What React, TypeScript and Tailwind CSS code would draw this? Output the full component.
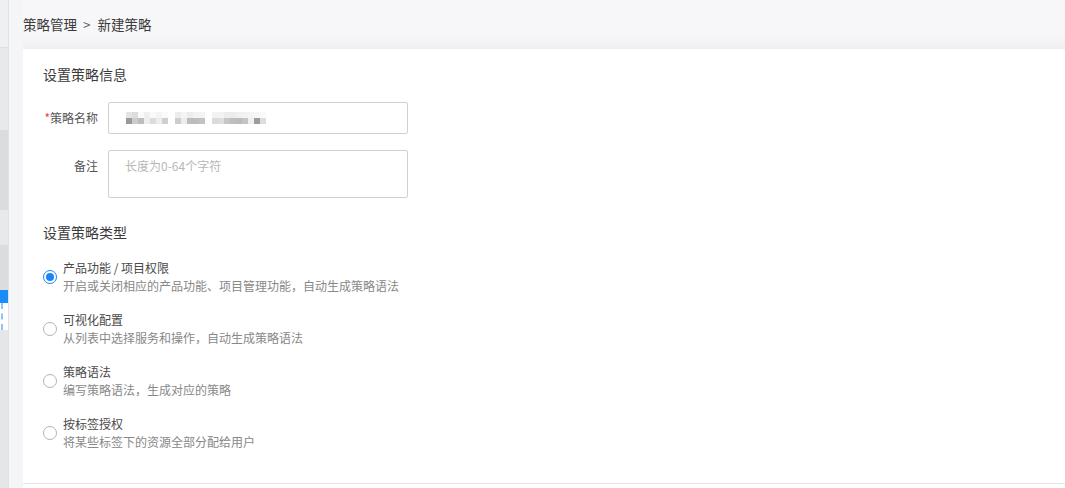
import React from 'react'

const font = "font-['Noto_Sans_CJK_SC','Microsoft_YaHei',sans-serif]"

interface PolicyType {
  title: string
  desc: string
  checked?: boolean
}

const policyTypes: PolicyType[] = [
  { title: '产品功能 / 项目权限', desc: '开启或关闭相应的产品功能、项目管理功能，自动生成策略语法', checked: true },
  { title: '可视化配置', desc: '从列表中选择服务和操作，自动生成策略语法' },
  { title: '策略语法', desc: '编写策略语法，生成对应的策略' },
  { title: '按标签授权', desc: '将某些标签下的资源全部分配给用户' },
]

// mosaic over the masked policy name
const mosaicTop: string[][] = [
  ['bg-[#e4e4e4]', 'bg-[#dcdcdc]', 'bg-[#fafafa]', 'bg-[#f0f0f0]', 'bg-[#fafafa]', 'bg-[#f4f4f4]', 'bg-[#fafafa]'],
  ['bg-[#ececec]', 'bg-[#f4f4f4]', 'bg-[#ececec]', 'bg-[#f2f2f2]', 'bg-[#f4f4f4]'],
  ['bg-[#f2f2f2]', 'bg-[#f2f2f2]', 'bg-[#ececec]', 'bg-[#ececec]', 'bg-[#f0f0f0]', 'bg-[#f2f2f2]', 'bg-[#f4f4f4]', 'bg-[#f6f6f6]', 'bg-[#fafafa]'],
]
const mosaicBottom: string[][] = [
  ['bg-[#9a9a9a]', 'bg-[#cbcbcb]', 'bg-[#bdbdbd]', 'bg-[#eeeeee]', 'bg-[#dcdcdc]', 'bg-[#ededed]', 'bg-[#cfcfcf]'],
  ['bg-[#cdcdcd]', 'bg-[#ededed]', 'bg-[#bcbcbc]', 'bg-[#bdbdbd]', 'bg-[#c2c2c2]'],
  ['bg-[#dadada]', 'bg-[#dedede]', 'bg-[#c6c6c6]', 'bg-[#bebebe]', 'bg-[#bbbbbb]', 'bg-[#c4c4c4]', 'bg-[#efefef]', 'bg-[#9c9c9c]', 'bg-[#dddddd]'],
]

function Mosaic() {
  return (
    <div className="flex gap-[7px]">
      {mosaicTop.map((group, g) => (
        <div key={g} className="flex flex-col">
          <div className="flex">
            {group.map((c, i) => (
              <div key={i} className={`h-[6px] w-[6px] ${c}`} />
            ))}
          </div>
          <div className="flex">
            {mosaicBottom[g].map((c, i) => (
              <div key={i} className={`h-[6px] w-[6px] ${c}`} />
            ))}
          </div>
        </div>
      ))}
    </div>
  )
}

function Radio({ checked }: { checked?: boolean }) {
  return checked ? (
    <div className="flex h-[14px] w-[14px] shrink-0 items-center justify-center rounded-full border border-[#1a86f5] bg-white">
      <div className="h-[8px] w-[8px] rounded-full bg-[#1a86f5]" />
    </div>
  ) : (
    <div className="h-[14px] w-[14px] shrink-0 rounded-full border border-[#b4b4b4] bg-white" />
  )
}

export default function App() {
  return (
    <div className={`flex h-[488px] w-[1065px] overflow-hidden bg-[#f4f5f7] ${font}`}>
      {/* cut-off side menu */}
      <div className="flex w-[9px] shrink-0 flex-col border-r border-[#e2e2e4]">
        <div className="h-[48px] bg-[#f0f0f2] border-b border-[#e0e0e2]" />
        <div className="h-[82px] bg-[#e9e9eb]" />
        <div className="h-[80px] bg-[#dcdcde]" />
        <div className="h-[35px] bg-[#e9e9eb]" />
        <div className="h-[45px] bg-[#dcdcde]" />
        <div className="h-[13px] bg-[#1a8cf7]" />
        <div className="flex h-[27px] bg-white pl-px">
          <div className="w-[2px] border-l-2 border-dashed border-[#8ec4f7]" />
        </div>
        <div className="flex-1 bg-[#e6e6e8]" />
      </div>

      <div className="flex min-w-0 flex-1 flex-col pl-[14px]">
        <div className="flex h-[49px] shrink-0 items-center bg-gradient-to-b from-[#f7f7f9] from-70% to-[#efeff1] text-[13.5px] leading-none text-[#3a3a3a]">
          <span>策略管理</span>
          <span className="ml-[6px] mr-[7px] text-[#666]">&gt;</span>
          <span>新建策略</span>
        </div>

        <div className="flex h-[435px] flex-col border-b border-[#e5e5e5] bg-white pl-[20px] pt-[15px]">
          <h3 className="text-[14px] leading-[20px] text-[#3a3a3a]">设置策略信息</h3>

          <div className="mt-[18px] flex flex-col gap-[16px]">
            <div className="flex items-center">
              <label className="w-[55px] text-right text-[12px] leading-[18px] text-[#555]">
                <span className="text-[#e54545]">*</span>策略名称
              </label>
              <div className="ml-[10px] flex h-[32px] w-[300px] items-center rounded-[2px] border border-[#d0d0d0] pl-[17px]">
                <Mosaic />
              </div>
            </div>
            <div className="flex items-start">
              <label className="w-[55px] pt-[7px] text-right text-[12px] leading-[18px] text-[#555]">备注</label>
              <div className="ml-[10px] h-[48px] w-[300px] rounded-[2px] border border-[#d0d0d0] pl-[16px] pt-[6px] text-[12px] leading-[18px] text-[#b8b8b8]">
                长度为0-64个字符
              </div>
            </div>
          </div>

          <h3 className="mt-[24px] text-[14px] leading-[20px] text-[#3a3a3a]">设置策略类型</h3>

          <div className="mt-[17px] flex flex-col gap-[16px]">
            {policyTypes.map((t) => (
              <div key={t.title} className="flex items-center gap-[6px]">
                <Radio checked={t.checked} />
                <div className="flex flex-col text-[12px] leading-[18px]">
                  <span className="text-[#4a4a4a]">{t.title}</span>
                  <span className="text-[#888]">{t.desc}</span>
                </div>
              </div>
            ))}
          </div>
        </div>
        <div className="flex-1 bg-white" />
      </div>
    </div>
  )
}
